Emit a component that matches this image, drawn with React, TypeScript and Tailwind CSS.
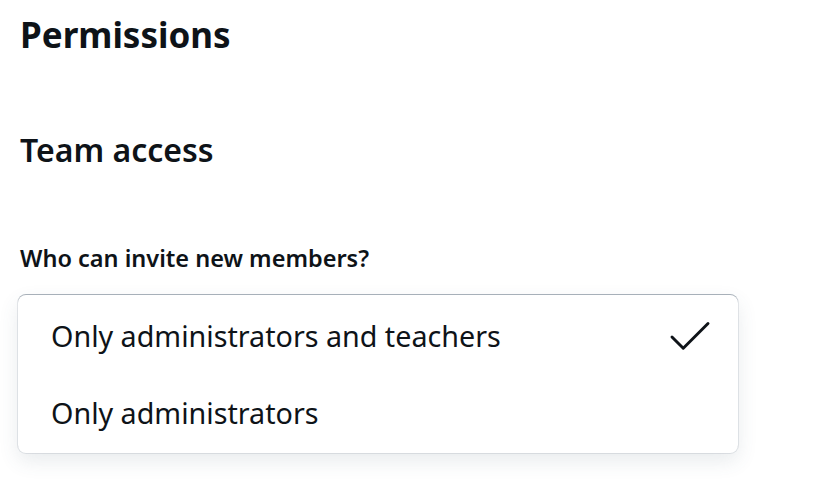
import { Check } from "lucide-react";

const options = [
  { id: "admins_teachers", label: "Only administrators and teachers" },
  { id: "admins", label: "Only administrators" },
];

export default function App() {
  const selected = "admins_teachers";

  return (
    <div className="min-h-screen bg-white px-[20px] pt-[13px] font-['Noto_Sans',sans-serif] text-[#0e1318]">
      <h1 className="text-[35px] font-bold leading-[44px]">Permissions</h1>
      <h2 className="mt-[73px] text-[32px] font-semibold leading-[40px]">Team access</h2>
      <div className="mt-[73px] text-[23.5px] font-semibold leading-[30px]">Who can invite new members?</div>

      <div className="mt-[22px] -ml-[2px] w-[720px] rounded-[8px] bg-white pt-[3px] pb-[1px] shadow-[0_-1px_0_0_rgba(57,76,96,0.35),0_0_0_1px_rgba(57,76,96,0.12),0_8px_20px_rgba(64,87,109,0.12)]">
        {options.map((opt) => (
          <div key={opt.id} className="flex h-[77px] items-center justify-between pl-[33px] pr-[21px] text-[28.7px] leading-none">
            <span>{opt.label}</span>
            {selected === opt.id && <Check className="h-[54px] w-[54px]" strokeWidth={1.3} />}
          </div>
        ))}
      </div>
    </div>
  );
}
